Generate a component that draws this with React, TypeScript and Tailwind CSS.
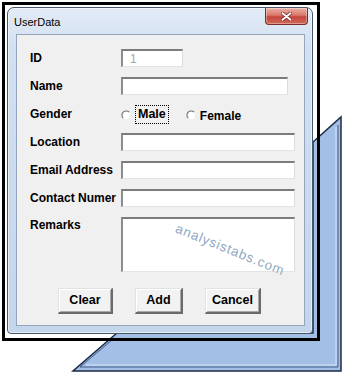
import React from "react";

const Input = ({ w, children }: { w: string; children?: React.ReactNode }) => (
  <div
    className={`${w} h-[18px] bg-white border-t-2 border-l-2 border-r border-b border-t-[#7c7c7c] border-l-[#8c8c8c] border-r-[#dcdcdc] border-b-[#e4e4e4] flex items-center`}
  >
    {children}
  </div>
);

const Radio = () => (
  <svg width="10" height="10" viewBox="0 0 10 10" className="shrink-0">
    <circle cx="5" cy="5" r="4" fill="#ffffff" />
    <path d="M8.2 2.2 A4 4 0 1 0 2.2 8.2" fill="none" stroke="#6f6f6f" strokeWidth="1.1" />
  </svg>
);

const Btn = ({ w, label }: { w: string; label: string }) => (
  <div
    className={`${w} h-[26px] bg-[#f2f2f2] border-t border-l border-r-2 border-b-2 border-t-[#e2e2e2] border-l-[#e2e2e2] border-r-[#6a6a6a] border-b-[#6a6a6a] shadow-[inset_1px_1px_0_#ffffff,inset_-1px_-1px_0_#a9a9a9] flex items-center justify-center text-[12.5px] font-bold text-black`}
  >
    {label}
  </div>
);

const Row = ({ label, children }: { label: string; children?: React.ReactNode }) => (
  <div className="flex items-center h-[18px]">
    <div className="w-[91px] text-[12px] leading-[14px] font-bold text-black">{label}</div>
    {children}
  </div>
);

export default function App() {
  return (
    <div className="relative w-[343px] h-[372px] bg-white overflow-hidden pl-[2px] pt-[2px] font-['Liberation_Sans',Arial,sans-serif]">
      <svg className="absolute inset-0" width="343" height="372" viewBox="0 0 343 372">
        <polygon
          points="313,142 341,117 341,371 73,371 117,333 313,333"
          fill="#a4bfe5"
          stroke="#1c2a45"
          strokeWidth="1.5"
        />
        <polyline
          points="338,125 338,367 80,367 112,340"
          fill="none"
          stroke="#3f5d8c"
          strokeWidth="1"
        />
        <polyline
          points="336,127 336,365 86,365"
          fill="none"
          stroke="#d7e4f5"
          strokeWidth="1"
        />
      </svg>

      <div className="relative w-[318px] h-[339px] border-[3px] border-black p-[2px]">
        <div className="w-[306px] h-[327px] border border-[#48566a] rounded-t-[7px] rounded-b-[4px] bg-[linear-gradient(180deg,#e3ecf7_0%,#d2e0f1_12%,#c3d6ec_100%)] shadow-[inset_0_0_0_1px_rgba(255,255,255,0.55)] flex flex-col">
          <div className="h-[26px] flex items-start">
            <div className="pl-[6px] pt-[7px] text-[11px] leading-[14px] text-black">UserData</div>
            <div className="ml-auto mr-[4px] w-[43px] h-[17px] rounded-b-[4px] border border-t-0 border-[#7a2e25] bg-[linear-gradient(180deg,#eab3a7_0%,#d9786a_45%,#c4473a_55%,#d06859_100%)] shadow-[inset_0_0_0_1px_rgba(255,255,255,0.35)] flex items-center justify-center">
              <svg width="11" height="9" viewBox="0 0 11 9">
                <path d="M1.5 1.2 L9.5 7.8 M9.5 1.2 L1.5 7.8" stroke="#6b231b" strokeWidth="3.4" strokeLinecap="round" />
                <path d="M1.5 1.2 L9.5 7.8 M9.5 1.2 L1.5 7.8" stroke="#ffffff" strokeWidth="2" strokeLinecap="round" />
              </svg>
            </div>
          </div>

          <div className="relative mx-[8px] w-[289px] h-[292px] border border-[#93a6bd] bg-[#f0f0f0] pl-[13px] pt-[14px] flex flex-col">
            <div className="flex flex-col gap-[10px]">
              <Row label="ID">
                <Input w="w-[62px]">
                  <span className="pl-[7px] text-[12px] leading-none text-[#a8a8a8]">1</span>
                </Input>
              </Row>
              <Row label="Name">
                <Input w="w-[167px]" />
              </Row>
              <Row label="Gender">
                <div className="flex items-center pt-[1px]">
                  <Radio />
                  <div className="ml-[4px] px-[2px] h-[19px] border border-dotted border-black flex items-center text-[12.5px] font-bold leading-none text-black">
                    Male
                  </div>
                  <div className="ml-[17px]">
                    <Radio />
                  </div>
                  <div className="ml-[4px] text-[12px] font-bold leading-none text-black pt-[2px]">Female</div>
                </div>
              </Row>
              <Row label="Location">
                <Input w="w-[174px]" />
              </Row>
              <Row label="Email Address">
                <Input w="w-[174px]" />
              </Row>
              <Row label="Contact Numer">
                <Input w="w-[174px]" />
              </Row>
              <div className="flex items-start h-[55px]">
                <div className="w-[91px] pt-[1px] text-[12px] leading-[14px] font-bold text-black">Remarks</div>
                <div className="w-[174px] h-[55px] bg-white border-t-2 border-l-2 border-r border-b border-t-[#7c7c7c] border-l-[#8c8c8c] border-r-[#dcdcdc] border-b-[#e4e4e4]" />
              </div>
            </div>

            <div className="mt-[16px] ml-[28px] flex gap-[22px]">
              <Btn w="w-[55px]" label="Clear" />
              <Btn w="w-[48px]" label="Add" />
              <Btn w="w-[56px]" label="Cancel" />
            </div>

            <div className="absolute left-[151px] top-[207px] w-[124px] h-[16px] rotate-[22deg] flex items-center justify-center text-[13.5px] leading-none tracking-[0.8px] text-[#93a9c2] [text-shadow:0_0_1px_#ffffff]">
              analysistabs.com
            </div>
          </div>
        </div>
      </div>
    </div>
  );
}
